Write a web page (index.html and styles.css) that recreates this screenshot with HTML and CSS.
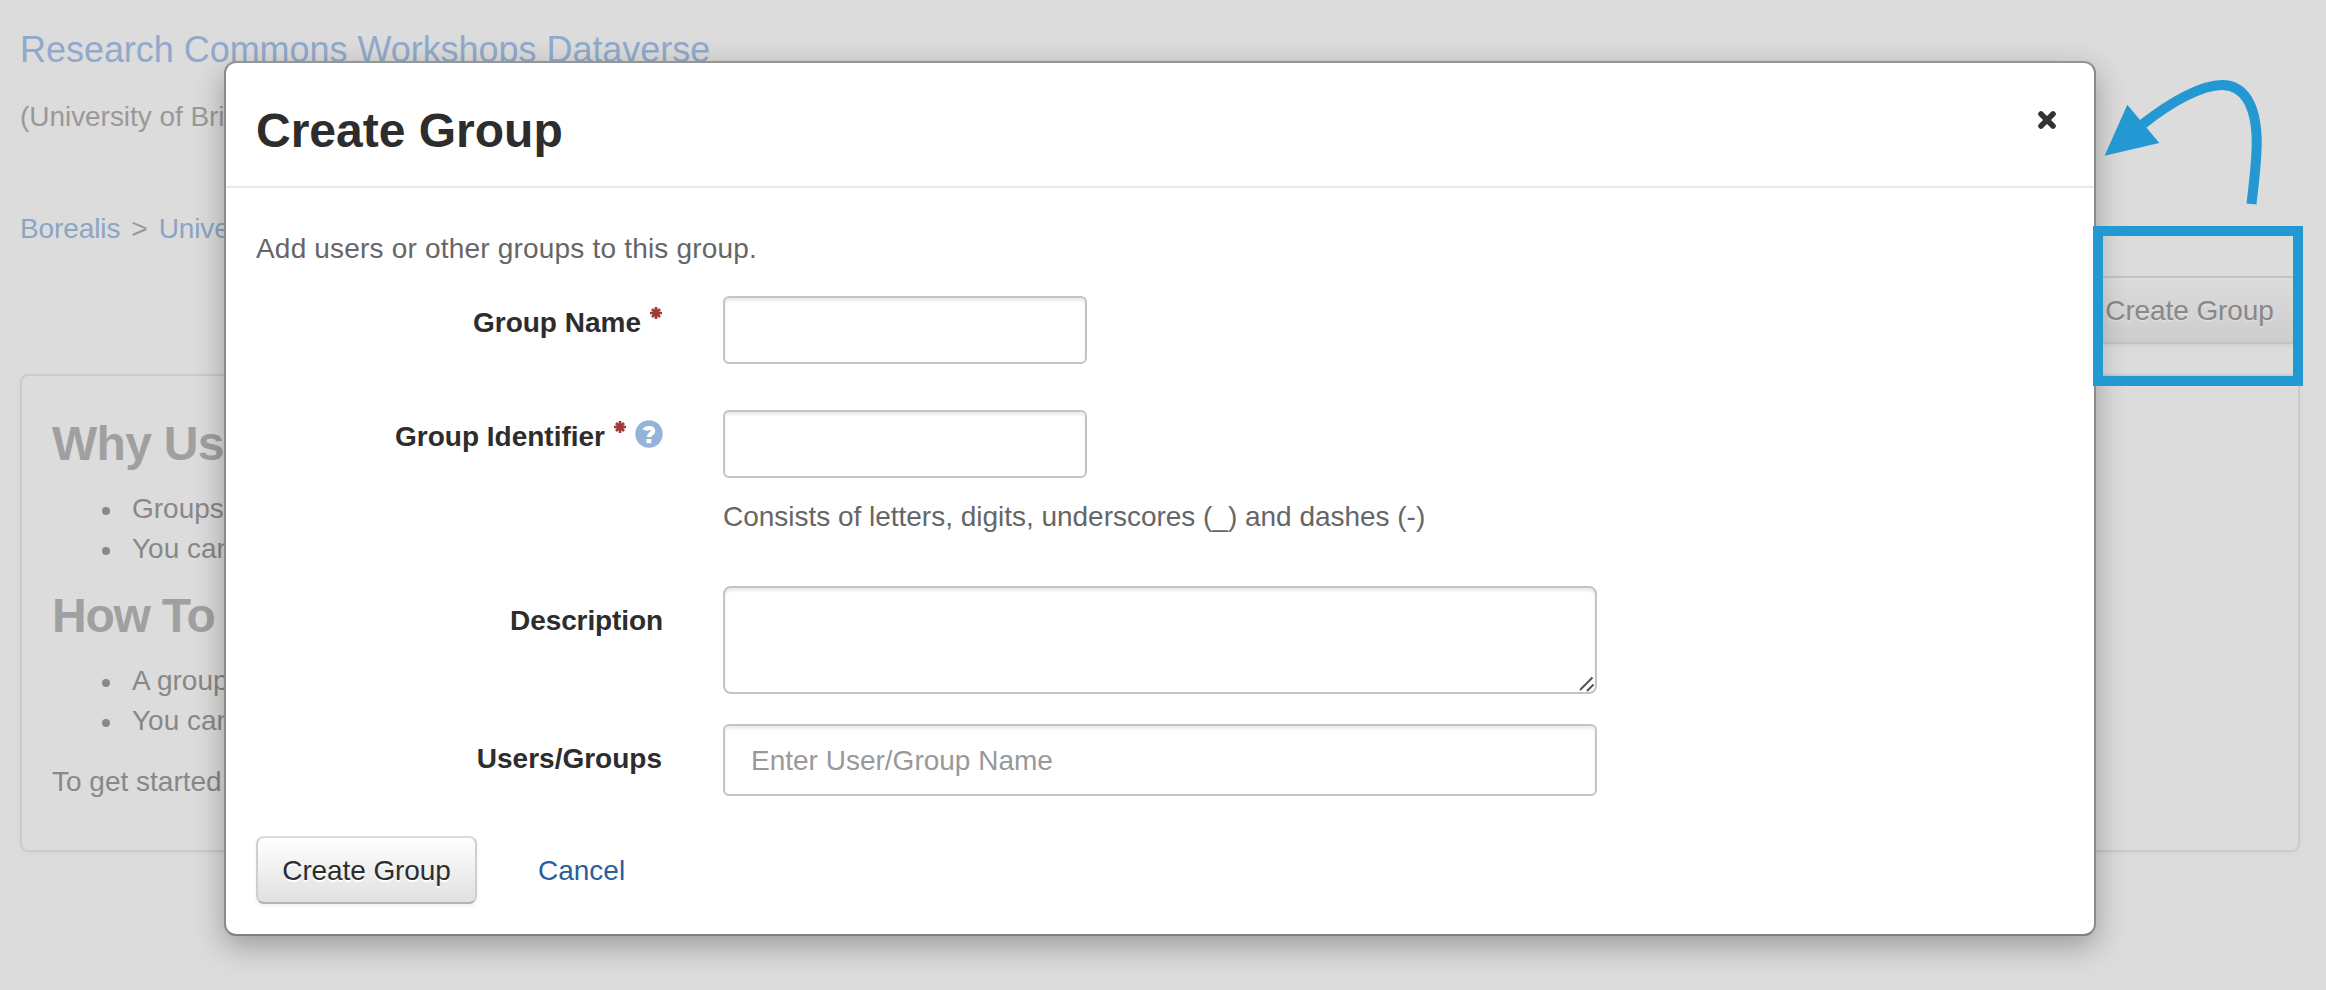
FILE: index.html
```html
<!DOCTYPE html>
<html lang="en">
<head>
<meta charset="utf-8">
<title>Create Group</title>
<link rel="stylesheet" href="styles.css">
</head>
<body>
<main class="page">
  <h1 class="dataverse-name"><a>Research Commons Workshops Dataverse</a></h1>
  <p class="affiliation">(University of British</p>
  <nav class="breadcrumb"><a>Borealis</a><span class="sep">&gt;</span><a>University</a></nav>
  <div class="toolbar"><button class="btn btn-muted">Create Group</button></div>
  <section class="panel">
    <h2>Why Use</h2>
    <ul><li>Groups</li><li>You can</li></ul>
    <h2 class="how">How To</h2>
    <ul><li>A group</li><li>You can</li></ul>
    <p>To get started</p>
  </section>
</main>

<div class="modal" role="dialog">
  <header class="modal-header">
    <h3>Create Group</h3>
    <svg class="close" viewBox="0 0 20 20"><path d="M4 4L16 16M16 4L4 16" stroke="#333" stroke-width="5.6" stroke-linecap="round"/></svg>
  </header>
  <div class="modal-body">
    <p class="intro">Add users or other groups to this group.</p>
    <div class="row row-name">
      <label><span class="label-text">Group Name</span><svg class="required" viewBox="0 0 12 12"><path d="M6 0V12M0 6H12M2 2L10 10M10 2L2 10"/></svg></label>
      <input class="field short" type="text">
    </div>
    <div class="row row-id">
      <label><span class="label-text">Group Identifier</span><svg class="required" viewBox="0 0 12 12"><path d="M6 0V12M0 6H12M2 2L10 10M10 2L2 10"/></svg><svg class="help" viewBox="0 0 28 28"><circle cx="14" cy="14" r="13.7"/><path class="hook" d="M9.8 10.2C10.6 7.7 18.5 6.7 18.1 11.2C17.8 13.9 14 13.5 14 17.1"/><rect x="11.5" y="19" width="4.8" height="4.2"/></svg></label>
      <div><input class="field short" type="text"><p class="hint">Consists of letters, digits, underscores (_) and dashes (-)</p></div>
    </div>
    <div class="row row-desc">
      <label><span class="label-text">Description</span></label>
      <div class="area-wrap"><textarea class="field area"></textarea><svg class="grip" viewBox="0 0 16 16"><path d="M1 14L13.5 1.5M8 15L14.5 8.5"/></svg></div>
    </div>
    <div class="row row-users">
      <label><span class="label-text">Users/Groups</span></label>
      <input class="field wide" type="text" placeholder="Enter User/Group Name">
    </div>
    <div class="actions"><button class="btn">Create Group</button><a class="cancel">Cancel</a></div>
  </div>
</div>

<div class="highlight"></div>
<svg class="arrow" viewBox="2096 70 180 140"><path class="shaft" d="M2251.5 204C2254 182 2257 160 2256.7 140C2256 105 2244 85 2222 85C2202 85 2172 101 2143 124"/><path class="head" d="M2104.6 155.8L2127.3 104.7L2159.3 143Z"/></svg>
</body>
</html>
```
FILE: styles.css
```css
* { box-sizing: border-box; }
body {
  margin: 0;
  width: 2326px;
  height: 990px;
  overflow: hidden;
  position: relative;
  background: #dcdcdc;
  font: 28px/40px "Liberation Sans", Arial, sans-serif;
  color: #888;
}
h1, h2, h3, p, ul { margin: 0; }

.page { padding: 30px 26px 0 20px; display: flex; flex-direction: column; }
.page a { color: #8ba5c4; }
.dataverse-name { font-size: 36px; font-weight: 400; letter-spacing: -.04px; }
.dataverse-name a { color: #90aacb; }
.affiliation { margin-top: 27px; color: #999; letter-spacing: -.05px; }
.breadcrumb { margin-top: 72px; display: flex; letter-spacing: -.1px; }
.sep { margin: 0 11px; color: #999; }
.toolbar { margin-top: 27px; display: flex; justify-content: flex-end; }
.panel {
  margin-top: 30px;
  height: 478px;
  padding: 42px 30px;
  border: 2px solid #cbcbcb;
  border-radius: 8px;
  box-shadow: 0 2px 4px rgba(0, 0, 0, .03);
}
.panel h2 { font-size: 48px; line-height: 52px; color: #a0a0a0; letter-spacing: -.7px; }
.panel .how { letter-spacing: -1.2px; }
.panel ul { margin: 19px 0 21px; padding-left: 80px; list-style: none; }
.panel li { display: flex; align-items: center; }
.panel li::before {
  content: "";
  width: 8px;
  height: 8px;
  margin: 4px 22px 0 -30px;
  border-radius: 50%;
  background: #888;
}
.panel p { margin-top: 19px; }

.btn {
  height: 68px;
  width: 221px;
  padding: 1px 0 0;
  border: 2px solid #dadada;
  border-color: #dadada #cfcfcf #b2b2b2;
  border-radius: 8px;
  background: linear-gradient(#fff, #e0e0e0);
  box-shadow: 0 2px 4px rgba(0, 0, 0, .06);
  font: inherit;
  letter-spacing: -.1px;
  color: #2d2d2d;
  text-shadow: 0 2px 0 #fff;
}
.btn-muted {
  border-color: #c3c3c3;
  background: linear-gradient(#dcdcdc, #cdcdcd);
  color: #888;
  text-shadow: 0 2px 0 #dcdcdc;
}

.modal {
  position: absolute;
  left: 224px;
  top: 61px;
  width: 1872px;
  height: 875px;
  border: 2px solid;
  border-color: #959595 #8b8b8b #808080;
  border-radius: 12px;
  background: #fff;
  box-shadow: 0 10px 30px rgba(0, 0, 0, .3);
}
.modal-header {
  height: 125px;
  padding: 42px 37px 0 30px;
  border-bottom: 2px solid #e8e8e8;
  display: flex;
  justify-content: space-between;
}
.modal-header h3 { font-size: 48px; line-height: 52px; color: #2d2d2d; }
.close { width: 20px; height: 20px; margin-top: 5px; }
.modal-body { padding: 41px 30px 0; color: #666; }
.intro { letter-spacing: .19px; }
.row { display: grid; grid-template-columns: 406px auto; column-gap: 61px; justify-content: start; }
.row-name { margin-top: 27px; height: 68px; }
.row-id { margin-top: 46px; }
.row-desc { margin-top: 49px; }
.row-users { margin-top: 30px; }
label { display: flex; justify-content: flex-end; padding-top: 7px; font-weight: 700; color: #2d2d2d; }
.row-id label { margin-right: -1px; }
.row-desc label, .row-users label { padding-top: 15px; }
.row-desc label { letter-spacing: -.1px; margin-right: -1px; }
.required { width: 12px; height: 12px; margin: 4px 0 0 9px; }
.required path { stroke: #a03a36; stroke-width: 2.6; }
.help { width: 28px; height: 28px; margin: 3px 0 0 9px; }
.help circle { fill: #94b3d8; }
.help rect { fill: #fff; }
.hook { fill: none; stroke: #fff; stroke-width: 4.4; }
.field {
  display: block;
  margin: 0;
  padding: 0 26px;
  border: 2px solid #c4c4c4;
  border-radius: 6px;
  background: #fff;
  box-shadow: inset 0 3px 3px rgba(0, 0, 0, .08);
  font: inherit;
}
.field::placeholder { color: #999; opacity: 1; }
.short { width: 364px; height: 68px; }
.wide { width: 874px; height: 72px; padding-top: 1px; }
.area { width: 874px; height: 108px; border-radius: 8px; resize: none; }
.area-wrap { position: relative; }
.grip { position: absolute; right: 2px; bottom: 2px; width: 16px; height: 16px; }
.grip path { stroke: #555; stroke-width: 2; }
.hint { margin-top: 19px; letter-spacing: -.02px; }
.actions { margin-top: 40px; display: flex; align-items: center; gap: 61px; }
.cancel { color: #2a5f9e; padding-top: 1px; }

.highlight {
  position: absolute;
  left: 2093px;
  top: 226px;
  width: 210px;
  height: 160px;
  border: 10px solid #2398d2;
}
.arrow { position: absolute; left: 2096px; top: 70px; width: 180px; height: 140px; }
.shaft { fill: none; stroke: #2398d2; stroke-width: 10; }
.head { fill: #2398d2; }
```
